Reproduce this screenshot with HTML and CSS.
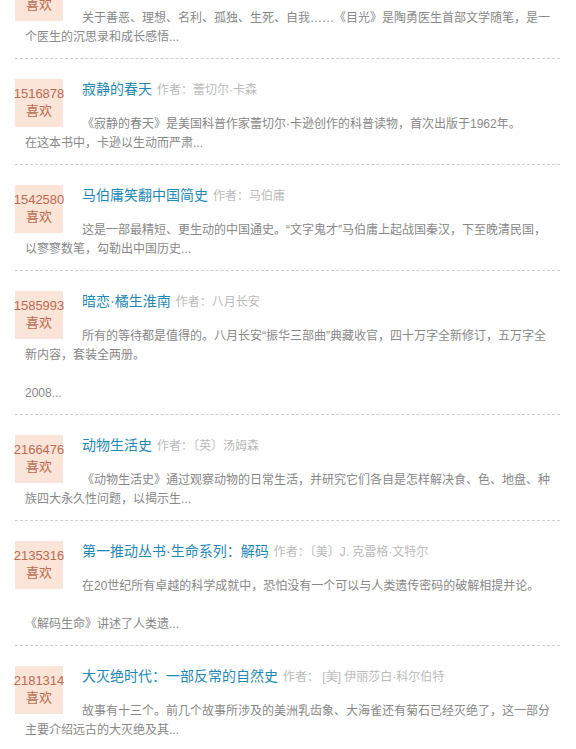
FILE: index.html
```html
<!DOCTYPE html>
<html lang="zh-CN">
<head>
<meta charset="utf-8">
<title>书单</title>
<link rel="stylesheet" href="styles.css">
</head>
<body>
<div class="list">
  <div class="item">
    <div class="badge"><span class="num">1498213</span><span class="like">喜欢</span></div>
    <div class="title"><a class="name">目光</a><span class="author">作者：陶勇</span></div>
    <p class="desc">关于善恶、理想、名利、孤独、生死、自我……《目光》是陶勇医生首部文学随笔，是一个医生的沉思录和成长感悟...</p>
  </div>
  <div class="item">
    <div class="badge"><span class="num">1516878</span><span class="like">喜欢</span></div>
    <div class="title"><a class="name">寂静的春天</a><span class="author">作者：蕾切尔·卡森</span></div>
    <p class="desc">《寂静的春天》是美国科普作家蕾切尔·卡逊创作的科普读物，首次出版于1962年。<br>在这本书中，卡逊以生动而严肃...</p>
  </div>
  <div class="item">
    <div class="badge"><span class="num">1542580</span><span class="like">喜欢</span></div>
    <div class="title"><a class="name">马伯庸笑翻中国简史</a><span class="author">作者：马伯庸</span></div>
    <p class="desc">这是一部最精短、更生动的中国通史。“文字鬼才”马伯庸上起战国秦汉，下至晚清民国，以寥寥数笔，勾勒出中国历史...</p>
  </div>
  <div class="item">
    <div class="badge"><span class="num">1585993</span><span class="like">喜欢</span></div>
    <div class="title"><a class="name">暗恋·橘生淮南</a><span class="author">作者：八月长安</span></div>
    <p class="desc">所有的等待都是值得的。八月长安“振华三部曲”典藏收官，四十万字全新修订，五万字全新内容，套装全两册。<br><br>2008...</p>
  </div>
  <div class="item">
    <div class="badge"><span class="num">2166476</span><span class="like">喜欢</span></div>
    <div class="title"><a class="name">动物生活史</a><span class="author">作者：〔英〕汤姆森</span></div>
    <p class="desc">《动物生活史》通过观察动物的日常生活，并研究它们各自是怎样解决食、色、地盘、种族四大永久性问题，以揭示生...</p>
  </div>
  <div class="item">
    <div class="badge"><span class="num">2135316</span><span class="like">喜欢</span></div>
    <div class="title"><a class="name">第一推动丛书·生命系列：解码</a><span class="author">作者：〔美〕J. 克雷格·文特尔</span></div>
    <p class="desc">在20世纪所有卓越的科学成就中，恐怕没有一个可以与人类遗传密码的破解相提并论。<br><br>《解码生命》讲述了人类遗...</p>
  </div>
  <div class="item">
    <div class="badge"><span class="num">2181314</span><span class="like">喜欢</span></div>
    <div class="title"><a class="name">大灭绝时代：一部反常的自然史</a><span class="author">作者：&nbsp;[美] 伊丽莎白·科尔伯特</span></div>
    <p class="desc">故事有十三个。前几个故事所涉及的美洲乳齿象、大海雀还有菊石已经灭绝了，这一部分主要介绍远古的大灭绝及其...</p>
  </div>
</div>
</body>
</html>
```

FILE: styles.css
```css
html, body {
  margin: 0;
  padding: 0;
  background: #ffffff;
}

body {
  font-family: "Liberation Sans", "Noto Sans CJK SC", sans-serif;
  font-size: 12px;
  color: #888888;
}

.list {
  margin-top: -47px;
}

.item {
  margin: 0 16px 0 15px;
  padding: 20px 0 11px;
  border-bottom: 1px dashed #cfcfcf;
}

.item::after {
  content: "";
  display: block;
  clear: both;
}

.badge {
  float: left;
  width: 48px;
  height: 48px;
  box-sizing: border-box;
  padding-top: 6px;
  margin-right: 19px;
  background: #fbe5d8;
  color: #bd6a50;
  font-size: 13px;
  line-height: 17px;
  text-align: center;
  display: flex;
  flex-direction: column;
  align-items: center;
}

.num {
  white-space: nowrap;
}

.title {
  height: 20px;
  line-height: 20px;
  margin-bottom: 16px;
  white-space: nowrap;
}

.name {
  font-size: 14px;
  color: #1f89b6;
}

.author {
  margin-left: 5px;
  font-size: 12px;
  color: #bbbbbb;
}

.desc {
  margin: 0;
  padding: 0 5px 0 10px;
  font-size: 12px;
  line-height: 19px;
  color: #888888;
}
```
